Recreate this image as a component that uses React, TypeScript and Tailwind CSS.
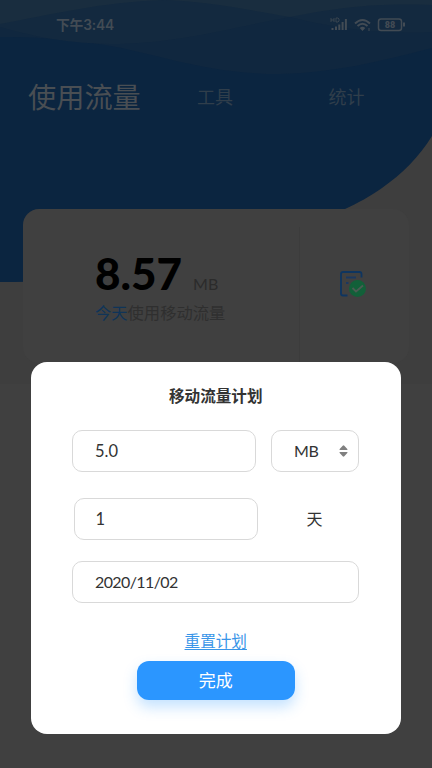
import React from 'react';

const fieldClass = 'flex items-center rounded-[10px] border border-[#d9d9d9] bg-white';

const Waves = () => (
  <svg className="absolute inset-0" width="432" height="384" viewBox="0 0 432 384">
    <path
      d="M0 0H432V136C419 157 402 174 382 188C369 197 358 203 345 209L300 240C220 282 90 281 0 282Z"
      fill="#0b2540"
    />
    <path d="M0 0H432V48C380 62 330 73 280 74C205 74 155 53 105 45C65 38 30 37 0 37Z" fill="#10273f" />
    <path d="M0 0H432V32C390 34 345 31 290 17C225 29 175 44 110 44C60 43 30 35 0 27Z" fill="#13293f" />
    <path d="M0 0H432V5C380 3 345 6 290 17C240 8 200 1 165 0C100 2 50 15 0 24Z" fill="#192d3f" />
  </svg>
);

const StatusIcons = () => (
  <svg width="76" height="18" viewBox="0 0 76 18" fill="none" stroke="#424b54">
    <path d="M1 3v4M4 3v4M1 5h3M6 3v4h2l1-1V4L8 3H6" strokeWidth=".8" />
    <path d="M2.500 13v2M6 11.500v3.500M9.300 9.500V15M12.600 7V15M15.900 4V15" strokeWidth="2" />
    <path d="M25 8.500q7.500-7 15 0M27.500 11q5-4.500 10 0" strokeWidth="2" />
    <path d="M29.700 13q2.800-2.300 5.600 0l-2.800 3z" fill="#424b54" stroke="none" />
    <path d="M39 13v3" strokeWidth="1" />
    <rect x="48.500" y="4" width="23" height="11.500" rx="2.500" strokeWidth="1.500" />
    <path d="M74 7.500v4" strokeWidth="2" />
    <text
      x="60"
      y="13"
      textAnchor="middle"
      className="font-['Roboto',sans-serif] text-[9px] font-black"
      fill="#424b54"
      stroke="none"
    >
      88
    </text>
  </svg>
);

const PlanIcon = () => (
  <svg width="28" height="28" viewBox="0 0 28 28" fill="none">
    <path
      d="M22.500 7.500V4Q22.500 2 20.500 2H4Q2 2 2 4V23.500Q2 25.500 4 25.500H8.500"
      stroke="#0e3560"
      strokeWidth="1.800"
    />
    <path d="M7 7.500H17M7 13h2.500" stroke="#1b3860" strokeWidth="1.800" />
    <circle cx="18.500" cy="18.500" r="8.500" fill="#126039" />
    <path d="M13.500 18l3.500 3.500 7-6" stroke="#4b5c53" strokeWidth="1.800" />
  </svg>
);

const PlanDialog = () => (
  <div className="absolute left-[31px] top-[361.500px] h-[372.500px] w-[369.500px] rounded-[16px] bg-white text-[#333]">
    <h2 className="pt-[22px] text-center text-[15.600px] leading-[24px] font-bold">移动流量计划</h2>
    <div className="mt-[22px] ml-[41px] flex gap-[15px]">
      <div className={`${fieldClass} h-[42px] w-[184px] pt-[2px] pl-[22px] text-[16.500px]`}>5.0</div>
      <div className={`${fieldClass} h-[42px] w-[88px] justify-between pr-[10px] pl-[22px] text-[16px]`}>
        <span className="tracking-[-0.4px]">MB</span>
        <svg width="9" height="12" viewBox="0 0 9 12" fill="#808080">
          <path d="M1 5Q0 5 .700 4L3.700.700Q4.500 0 5.300.700L8.300 4Q9 5 8 5ZM1 7Q0 7 .700 8L3.700 11.300Q4.500 12 5.300 11.300L8.300 8Q9 7 8 7Z" />
        </svg>
      </div>
    </div>
    <div className="mt-[26px] ml-[42.500px] flex items-center">
      <div className={`${fieldClass} h-[42px] w-[184px] pt-[2px] pl-[21px] text-[16.500px]`}>1</div>
      <span className="ml-[49px] pt-px text-[16px]">天</span>
    </div>
    <div className={`${fieldClass} mt-[21px] ml-[41px] h-[42px] w-[287px] pl-[22px] text-[16px] tracking-[-0.6px]`}>
      2020/11/02
    </div>
    <div className="flex flex-col items-center">
      <a className="mt-[26px] text-[15.600px] leading-[24px] text-[#3895e8] underline decoration-1 underline-offset-2">
        重置计划
      </a>
      <button className="mt-[8px] h-[39px] w-[158px] rounded-[12px] bg-[#2b96ff] pt-[2px] text-[17px] text-white shadow-[0_7px_14px_rgba(43,150,255,0.28)]">
        完成
      </button>
    </div>
  </div>
);

export default function App() {
  return (
    <main className="relative h-[768px] w-[432px] overflow-hidden bg-[#404040] font-['Lato','Noto_Sans_CJK_SC',sans-serif]">
      <div className="h-[384px] bg-[#3e3e3e]">
        <Waves />
        <div className="relative">
          <div className="flex h-[50px] justify-between pt-[15px] pr-[26px] pl-[56px] text-[13.800px] leading-[20px] text-[#424b54]">
            <span className="font-['Inter','Noto_Sans_CJK_SC',sans-serif] font-semibold tracking-[-0.2px]">下午3:44</span>
            <StatusIcons />
          </div>
          <nav className="flex h-[159px] pl-[28px] leading-[40px] text-[#303e4b]">
            <span className="w-[169px] pt-[27px] text-[28.200px] text-[#494e53]">使用流量</span>
            <span className="w-[131.500px] pt-[27px] text-[18px]">工具</span>
            <span className="pt-[27px] text-[18px]">统计</span>
          </nav>
          <section className="ml-[23px] flex h-[154px] w-[386px] rounded-[16px] bg-[#404040]">
            <div className="w-[276px] pl-[72px]">
              <div className="flex items-baseline pt-[38px] text-[#2b2b2b]">
                <strong className="text-[44px] leading-[52px] font-black text-black">8.57</strong>
                <span className="ml-[11px] text-[16px]">MB</span>
              </div>
              <p className="pt-[2px] text-[16.300px] leading-[24px] text-[#2f2f2f]">
                <span className="text-[#0f3458]">今天</span>使用移动流量
              </p>
            </div>
            <div className="mt-[18px] flex-1 border-l border-[#3c3c3c] pt-[43px] pl-[39px]">
              <PlanIcon />
            </div>
          </section>
        </div>
      </div>
      <PlanDialog />
    </main>
  );
}
